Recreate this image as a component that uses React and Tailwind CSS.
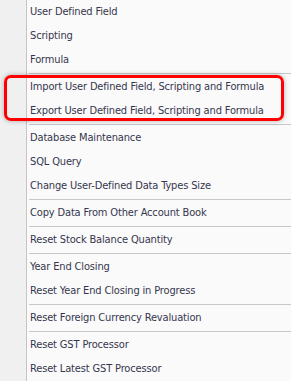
import React from "react";

const groups = [
  ["User Defined Field", "Scripting", "Formula"],
  ["Import User Defined Field, Scripting and Formula", "Export User Defined Field, Scripting and Formula"],
  ["Database Maintenance", "SQL Query", "Change User-Defined Data Types Size"],
  ["Copy Data From Other Account Book"],
  ["Reset Stock Balance Quantity"],
  ["Year End Closing", "Reset Year End Closing in Progress"],
  ["Reset Foreign Currency Revaluation"],
  ["Reset GST Processor", "Reset Latest GST Processor"],
];

export default function App() {
  return (
    <div
      className="relative w-[291px] h-[381px] overflow-hidden flex bg-[#fafafa] font-stretch-condensed"
      style={{ fontFamily: "'DejaVu Sans Condensed', 'DejaVu Sans', sans-serif" }}
    >
      <div className="w-[27px] shrink-0 bg-[#f0f0f0] border-r border-[#c5c5c5]" />
      <div className="flex-1 flex flex-col">
        {groups.map((g, gi) => (
          <React.Fragment key={gi}>
            {gi > 0 && (
              <div className="h-[3px] flex flex-col justify-center pl-[2px]">
                <div className="h-px bg-[#c8c8c8]" />
              </div>
            )}
            {g.map((t) => (
              <div
                key={t}
                className="h-[24px] flex items-center pt-px pl-[3px] text-[11px] tracking-[-0.15px] text-[#36364e] whitespace-nowrap"
              >
                {t}
              </div>
            ))}
          </React.Fragment>
        ))}
      </div>
      <div className="absolute left-[4px] top-[75px] w-[280px] h-[46px] rounded-[7px] border-[3px] border-[#ff0000] shadow-[0_0_5px_rgba(0,0,0,0.3)]" />
    </div>
  );
}
